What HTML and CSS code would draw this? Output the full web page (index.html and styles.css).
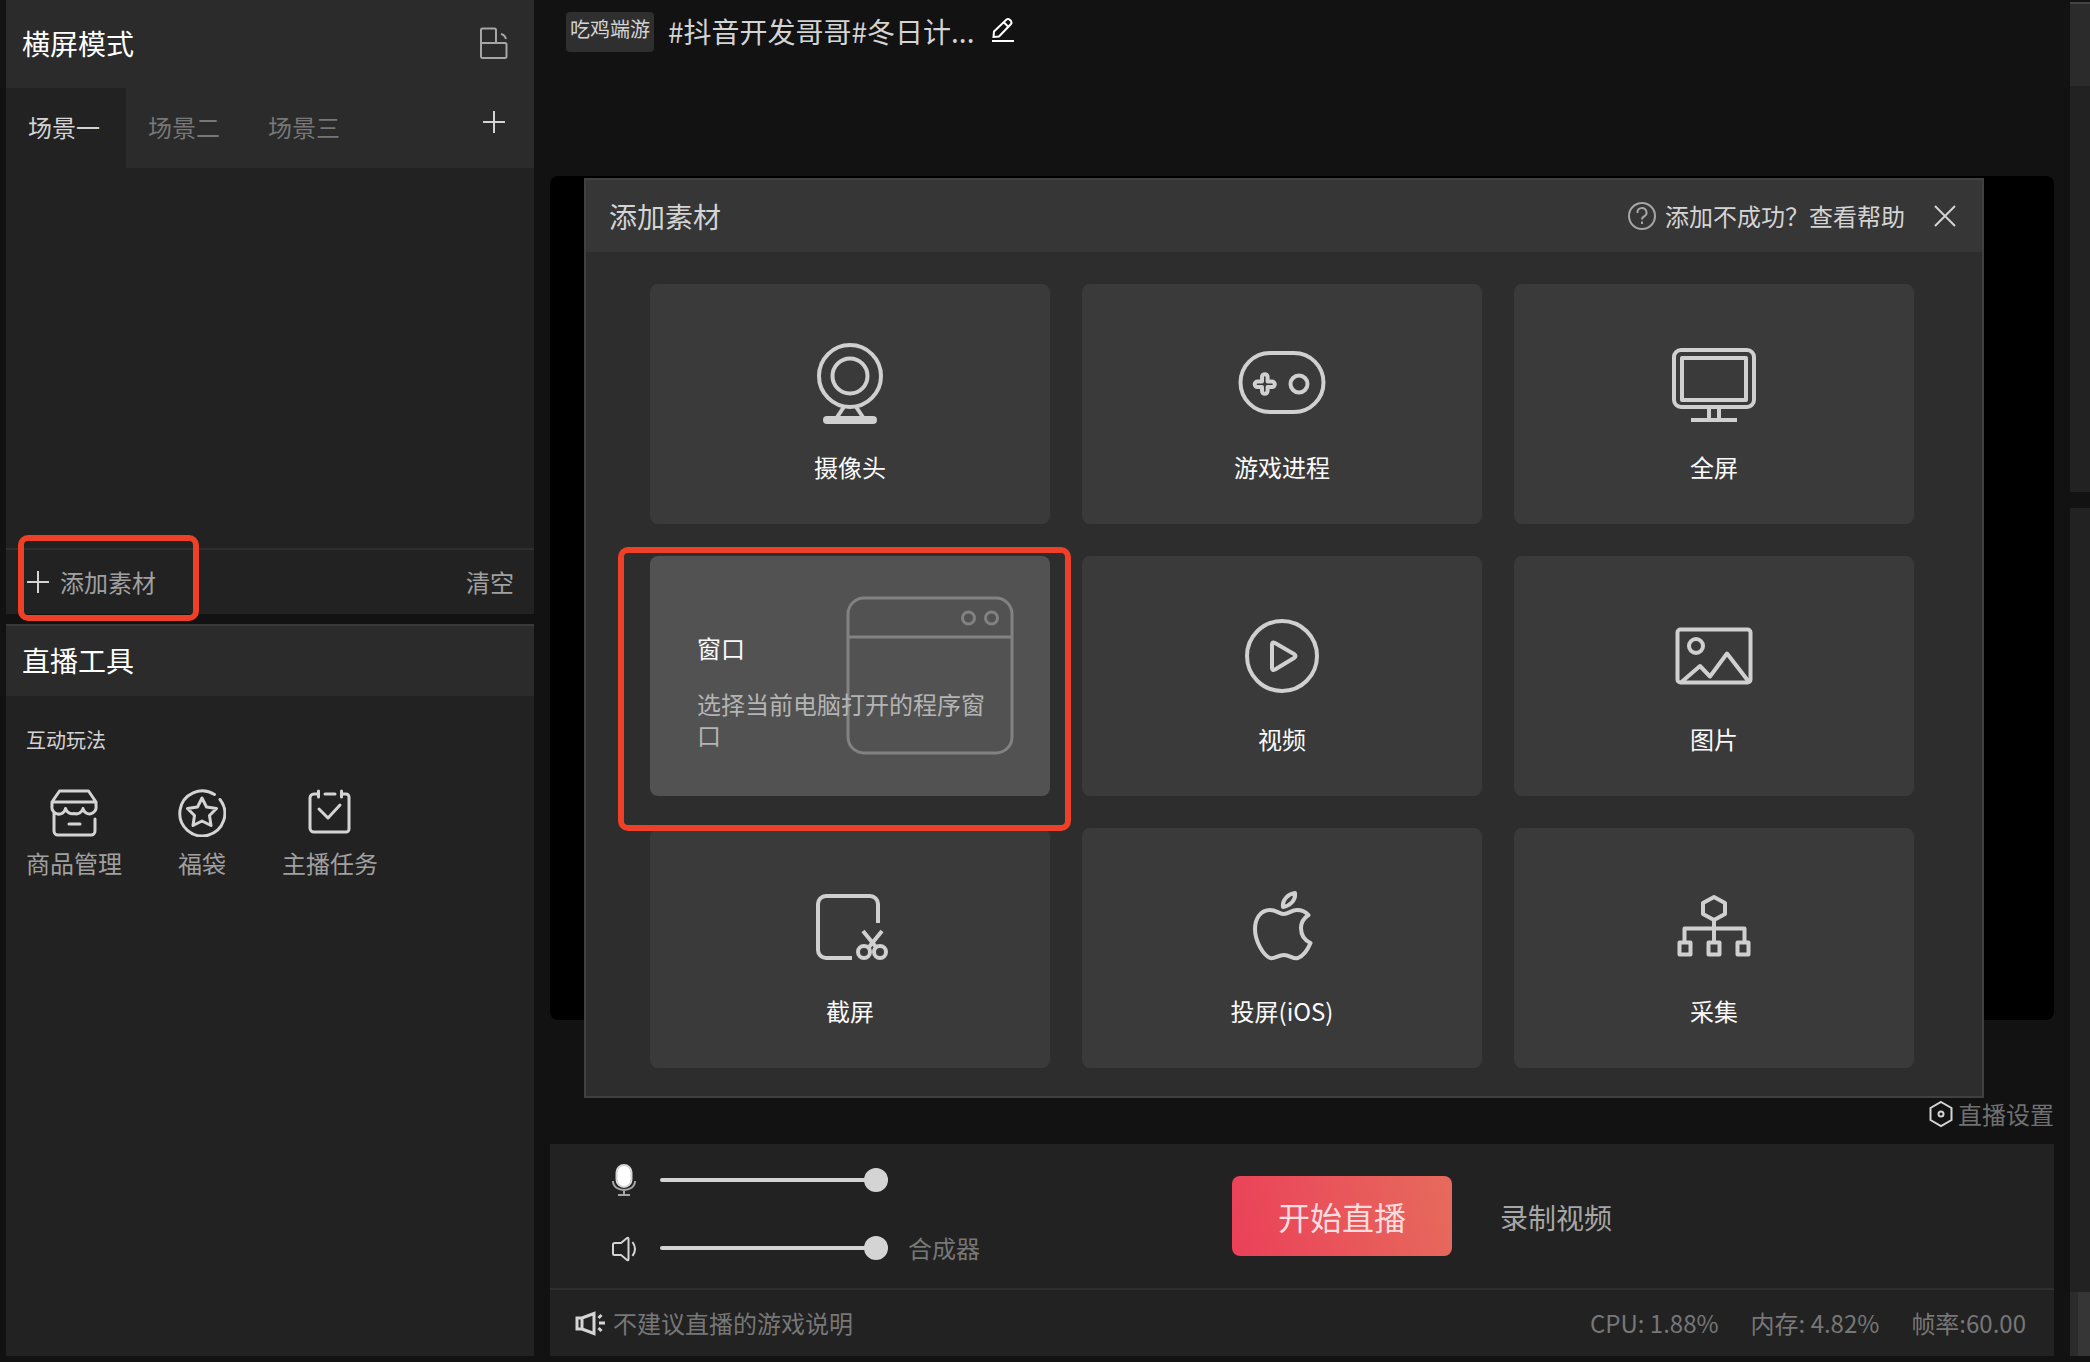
FILE: index.html
```html
<!DOCTYPE html>
<html lang="zh-CN">
<head>
<meta charset="utf-8">
<title>直播伴侣</title>
<link rel="stylesheet" href="styles.css">
</head>
<body>
<div class="app">
  <aside class="side">
    <section class="panel scenes">
      <header class="scenes-head">
        <h2 class="panel-title">横屏模式</h2>
        <button class="icon-btn" type="button" aria-label="切换横竖屏">
          <svg class="icon icon-muted" width="30" height="32" viewBox="0 0 30 32"><path d="M2 16V3a1.500 1.500 0 0 1 1.500-1.500h12A1.500 1.500 0 0 1 17 3v13M3 16h23a1.500 1.500 0 0 1 1.500 1.500v12A1.500 1.500 0 0 1 26 31H3.500A1.500 1.500 0 0 1 2 29.500V16zM22 7q4 1 5 5"/></svg>
        </button>
      </header>
      <nav class="tabs">
        <button class="tab tab-active" type="button">场景一</button>
        <button class="tab" type="button">场景二</button>
        <button class="tab" type="button">场景三</button>
        <button class="icon-btn tab-add" type="button" aria-label="添加场景">
          <svg class="icon" width="30" height="24" viewBox="0 0 30 24"><path d="M15 1v22M4 12h22"/></svg>
        </button>
      </nav>
      <div class="sources"></div>
      <footer class="source-bar">
        <button class="text-btn add-source" type="button">
          <svg class="icon" width="24" height="24" viewBox="0 0 24 24"><path d="M12 1v22M1 12h22"/></svg>
          添加素材
          <span class="mark mark-add"></span>
        </button>
        <button class="text-btn" type="button">清空</button>
      </footer>
    </section>
    <section class="panel tools">
      <header class="tools-head"><h2 class="panel-title">直播工具</h2></header>
      <h3 class="tools-group">互动玩法</h3>
      <div class="tools-grid">
        <button class="tool" type="button">
          <svg class="icon icon-bold" width="48" height="48" viewBox="0 0 48 48"><path d="M9.500 2h29L46 13v4a6.500 6.500 0 0 1-13 2.500 7 7 0 0 1-9 5 7 7 0 0 1-8.500-5A6.500 6.500 0 0 1 2 17v-4zM2 13h44M4 24v18a4 4 0 0 0 4 4h33a4 4 0 0 0 4-4V30M19 35h11"/></svg>
          商品管理
        </button>
        <button class="tool" type="button">
          <svg class="icon icon-bold" width="48" height="48" viewBox="0 0 48 48"><path d="M36.500 5.500A22.500 22.500 0 1 0 42 10.500M24 9l4.500 9 10 1.500-7 7 1.500 10-9-4.500-9 4.500 1.500-10-7-7 10-1.500z"/></svg>
          福袋
        </button>
        <button class="tool" type="button">
          <svg class="icon icon-bold" width="48" height="48" viewBox="0 0 48 48"><path d="M12 5H8a4 4 0 0 0-4 4v30a4 4 0 0 0 4 4h32a3 3 0 0 0 3-3V8a3 3 0 0 0-3-3h-4M12.500 2v6M35.500 2v6M19 5h10M13 20l9 9 12-13"/></svg>
          主播任务
        </button>
      </div>
    </section>
  </aside>

  <main class="main">
    <header class="room">
      <span class="room-tag">吃鸡端游</span>
      <h1 class="room-title">#抖音开发哥哥#冬日计...</h1>
      <button class="icon-btn" type="button" aria-label="编辑标题">
        <svg class="icon icon-white" width="26" height="26" viewBox="0 0 26 26"><path d="M2 24h22M4 14.500L16.500 2.500q1.500-1 3 0l1.500 1.500q1 1.500 0 3L9 19.500 3.500 20zM14 5.500l4 4"/></svg>
      </button>
    </header>

    <div class="stage">
      <section class="dialog" role="dialog" aria-labelledby="dialog-title">
        <header class="dialog-head">
          <h2 class="dialog-title" id="dialog-title">添加素材</h2>
          <a class="help" href="#">
            <svg class="icon icon-muted" width="30" height="30" viewBox="0 0 30 30"><circle cx="15" cy="15" r="13"/><path d="M10.500 12a4.500 4.500 0 1 1 6.500 3.500q-2 1-2 3M15 20.500v2.500"/></svg>
            添加不成功？查看帮助
          </a>
          <button class="icon-btn" type="button" aria-label="关闭">
            <svg class="icon" width="22" height="22" viewBox="0 0 22 22"><path d="M1 1l20 20M21 1L1 21"/></svg>
          </button>
        </header>
        <div class="cards">
          <button class="card" type="button">
            <svg class="icon icon-card" width="96" height="96" viewBox="0 0 96 96"><circle cx="48" cy="40" r="31"/><circle cx="48" cy="40" r="17.500"/><path d="M42.500 70L34.500 82M53.500 70l8 12"/><rect x="23" y="82" width="50" height="4" rx="2"/></svg>
            摄像头
          </button>
          <button class="card" type="button">
            <svg class="icon icon-card" width="96" height="96" viewBox="0 0 96 96"><rect x="6.500" y="17" width="83" height="59" rx="29.500"/><circle cx="65" cy="48" r="8.500"/><path d="M28 45.500V41a2.800 2.800 0 0 1 5.600 0v4.500H38a2.800 2.800 0 0 1 0 5.600h-4.400V55a2.800 2.800 0 0 1-5.600 0v-3.900h-4.500a2.800 2.800 0 0 1 0-5.600z"/></svg>
            游戏进程
          </button>
          <button class="card" type="button">
            <svg class="icon icon-card" width="96" height="96" viewBox="0 0 96 96"><rect x="8" y="14" width="80" height="57" rx="7"/><rect x="16" y="22" width="64" height="42"/><path d="M43 72v12M53 72v12M25 84h46"/></svg>
            全屏
          </button>
          <div class="card-slot">
            <button class="card card-open" type="button">
              <svg class="card-art" width="168" height="160" viewBox="0 0 168 160"><rect x="2" y="2" width="164" height="155" rx="16"/><path d="M2 41h164"/><circle cx="122.500" cy="22" r="6"/><circle cx="145.500" cy="22" r="6"/></svg>
              <span class="card-name">窗口</span>
              <span class="card-desc">选择当前电脑打开的程序窗口</span>
            </button>
            <span class="mark mark-card"></span>
          </div>
          <button class="card" type="button">
            <svg class="icon icon-card" width="96" height="96" viewBox="0 0 96 96"><circle cx="48" cy="48" r="35"/><path d="M38 36.500q0-3 3-1.500l19 11q3 2 0 4L41 61.500q-3 1.500-3-1.500z"/></svg>
            视频
          </button>
          <button class="card" type="button">
            <svg class="icon icon-card" width="96" height="96" viewBox="0 0 96 96"><rect x="11.500" y="21.500" width="73" height="53" rx="3"/><circle cx="30" cy="38" r="7"/><path d="M15.500 74L34 58l10 10.500L61 45.500 83 74"/></svg>
            图片
          </button>
          <button class="card" type="button">
            <svg class="icon icon-card" width="96" height="96" viewBox="0 0 96 96"><path d="M76 43V24a8 8 0 0 0-8-8H24a8 8 0 0 0-8 8v46a8 8 0 0 0 8 8h26M61 51l13 16M80 51L67 67"/><circle cx="62" cy="72" r="6"/><circle cx="78" cy="72" r="6"/></svg>
            截屏
          </button>
          <button class="card" type="button">
            <svg class="icon icon-card" width="96" height="96" viewBox="0 0 96 96"><path d="M50 34c-4 0-8-4-14-4-9 0-15 8-15 19 0 12 8 26 15 29 4 1.500 8-3 14-3s9 4.500 14 3c5-2 10-9 12.500-15C70 60 67 55 67 48c0-6 3-10 7.500-13C71 31 67 30 63 30c-5 0-9 4-13 4zM49 27c-1-7 5-13 12-14 1 7-5 13-12 14z"/></svg>
            投屏(iOS)
          </button>
          <button class="card" type="button">
            <svg class="icon icon-card" width="96" height="96" viewBox="0 0 96 96"><path d="M48 17l11 6v11l-11 6-11-6V23zM48 40v22M18.500 62V48.500h60V62"/><path d="M13.500 62.500h11v12h-11zM42.500 62.500h11v12h-11zM71.500 62.500h11v12h-11z"/></svg>
            采集
          </button>
        </div>
      </section>
    </div>

    <div class="settings-row">
      <button class="settings" type="button">
        <svg class="icon" width="26" height="28" viewBox="0 0 26 28"><path d="M13 2l10.500 6v12L13 26 2.500 20V8z"/><circle cx="13" cy="14" r="2.500"/></svg>
        直播设置
      </button>
    </div>

    <section class="console">
      <div class="console-main">
        <div class="mixer">
          <label class="channel">
            <svg class="icon" width="28" height="32" viewBox="0 0 28 32"><rect class="mic-head" x="6.500" y="1" width="15" height="22" rx="7.500"/><path class="mic-foot" d="M3 17c0 12 22 12 22 0M14 26v4M8 31h12"/></svg>
            <input class="slider" type="range" min="0" max="100" value="100" aria-label="麦克风音量">
          </label>
          <label class="channel">
            <svg class="icon" width="28" height="28" viewBox="0 0 28 28"><path d="M3 10.500a1.500 1.500 0 0 1 1.500-1.500H11l6-5q1.500-1 1.500 1v20q0 2-1.500 1l-6-5H4.500A1.500 1.500 0 0 1 3 19.500zM22.500 8q5 7 0 14"/></svg>
            <input class="slider" type="range" min="0" max="100" value="100" aria-label="扬声器音量">
            合成器
          </label>
        </div>
        <button class="start" type="button">开始直播</button>
        <button class="record" type="button">录制视频</button>
      </div>
      <footer class="status">
        <a class="notice" href="#">
          <svg class="icon" width="32" height="28" viewBox="0 0 32 28"><path class="horn" d="M3 9h5v11H3zM8 9l12-4.500v20L8 20M25 14h6M24.500 9l3-3M24.500 19l3 3"/></svg>
          不建议直播的游戏说明
        </a>
        <span>CPU: 1.88%</span>
        <span>内存: 4.82%</span>
        <span>帧率:60.00</span>
      </footer>
    </section>
  </main>

  <aside class="rail">
    <section class="panel rail-top"><div class="rail-head"></div></section>
    <section class="panel rail-bottom"><div class="rail-foot"></div></section>
  </aside>
</div>
</body>
</html>
```
FILE: styles.css
```css
* {
  box-sizing: border-box;
}

body {
  margin: 0;
  background: #121212;
  color: #d4d4d4;
  font-family: "Noto Sans CJK SC", "Noto Sans", sans-serif;
  font-size: 24px;
  line-height: 32px;
}

h1, h2, h3 {
  margin: 0;
  font-weight: 400;
}

button {
  margin: 0;
  padding: 0;
  border: 0;
  background: none;
  color: inherit;
  font: inherit;
  cursor: pointer;
}

a {
  color: inherit;
  text-decoration: none;
}

.icon {
  display: block;
  flex: none;
  fill: none;
  stroke: #d4d4d4;
  stroke-width: 2;
}

.icon-muted { stroke: #a6a6a6; }
.icon-white { stroke: #fff; }
.icon-bold { stroke-width: 3; stroke-linecap: round; stroke-linejoin: round; }
.icon-card { stroke: #d0d0d0; stroke-width: 4; stroke-linejoin: round; }
.icon-btn { display: flex; }
.horn { stroke-width: 3; }

.app {
  display: grid;
  grid-template-columns: 528px minmax(0, 1fr) 20px;
  gap: 16px;
  min-height: 100vh;
  padding: 0 0 6px 6px;
}

.panel { background: #222; }

.panel-title {
  color: #fff;
  font-size: 28px;
  line-height: 40px;
}

/* Left column */
.side {
  display: flex;
  flex-direction: column;
  gap: 10px;
}

.scenes {
  display: flex;
  flex-direction: column;
  height: 614px;
}

.scenes-head {
  display: flex;
  align-items: center;
  justify-content: space-between;
  height: 88px;
  padding: 0 25px 2px 16px;
  background: #2b2b2b;
}

.tabs {
  display: flex;
  height: 80px;
  padding-right: 25px;
  background: #2b2b2b;
}

.tab {
  width: 120px;
  padding: 0 4px 2px 0;
  color: #777;
}

.tab-active {
  background: #222;
  color: #d4d4d4;
}

.tab-add {
  margin-left: auto;
  padding-top: 22px;
}

.sources { flex: 1; }

.source-bar {
  display: flex;
  align-items: center;
  justify-content: space-between;
  height: 66px;
  padding: 0 20px;
  border-top: 2px solid #2f2f2f;
  color: #a0a0a0;
}

.text-btn {
  position: relative;
  display: flex;
  align-items: center;
  gap: 10px;
}

.mark {
  position: absolute;
  border: 6px solid #ee4026;
  border-radius: 10px;
  pointer-events: none;
}

.mark-add { inset: -31px -43px -23px -8px; }
.mark-card { inset: -9px -21px -35px -32px; }

.tools { flex: 1; }

.tools-head {
  display: flex;
  align-items: center;
  height: 72px;
  padding: 0 16px 2px;
  border-top: 2px solid #393939;
  background: #2b2b2b;
}

.tools-group {
  padding: 28px 20px 0;
  font-size: 20px;
}

.tools-grid {
  display: grid;
  grid-template-columns: repeat(4, 128px);
  padding: 33px 4px;
}

.tool {
  display: flex;
  flex-direction: column;
  align-items: center;
  gap: 10px;
  color: #a0a0a0;
}

/* Main column */
.main {
  display: flex;
  flex-direction: column;
  min-width: 0;
}

.room {
  display: flex;
  align-items: flex-start;
  height: 176px;
  padding: 12px 16px 0;
}

.room-tag {
  height: 40px;
  margin-right: 14px;
  padding: 0 4px;
  border-radius: 4px;
  background: #2f2f2f;
  font-size: 20px;
  line-height: 34px;
}

.room-title {
  margin-right: 16px;
  font-size: 28px;
  line-height: 38px;
}

.room .icon-btn { padding-top: 5px; }

.stage {
  position: relative;
  flex: 1;
  min-height: 844px;
  border-radius: 8px;
  background: #000;
}

.dialog {
  position: absolute;
  top: 2px;
  left: 34px;
  right: 70px;
  border: 2px solid #404040;
  background: #2d2d2d;
}

.dialog-head {
  display: flex;
  align-items: center;
  height: 72px;
  padding: 0 26px 0 23px;
  background: #363636;
}

.dialog-title {
  margin-right: auto;
  font-size: 28px;
  line-height: 40px;
}

.help {
  display: flex;
  align-items: center;
  gap: 8px;
  margin-right: 29px;
}

.cards {
  display: grid;
  grid-template-columns: repeat(3, minmax(0, 1fr));
  gap: 32px;
  padding: 32px 68px 28px 64px;
}

.card {
  display: flex;
  flex-direction: column;
  align-items: center;
  gap: 19px;
  width: 100%;
  height: 240px;
  padding-top: 52px;
  border-radius: 8px;
  background: #3a3a3a;
  color: #fafafa;
}

.card-slot {
  position: relative;
  z-index: 1;
}

.card-open {
  position: relative;
  align-items: flex-start;
  gap: 24px;
  padding: 76px 47px 0;
  background: #525252;
  text-align: left;
}

.card-art {
  position: absolute;
  top: 40px;
  right: 36px;
  fill: none;
  stroke: #828282;
  stroke-width: 3;
}

.card-name,
.card-desc {
  position: relative;
}

.card-desc {
  max-width: 300px;
  color: #b4b4b4;
  line-height: 31px;
}

.settings-row {
  display: flex;
  justify-content: flex-end;
  align-items: flex-start;
  height: 124px;
  padding-top: 78px;
}

.settings {
  display: flex;
  align-items: center;
  gap: 4px;
  color: #707070;
}

/* Console */
.console { background: #222; }

.console-main {
  display: flex;
  align-items: center;
  height: 144px;
}

.mixer {
  flex: 0 0 682px;
  padding: 0 0 4px 60px;
}

.channel {
  display: flex;
  align-items: center;
  height: 68px;
  color: #777;
}

.slider {
  width: 228px;
  height: 24px;
  margin: 0 20px 0 22px;
  background: none;
  appearance: none;
}

.slider::-webkit-slider-runnable-track {
  height: 4px;
  border-radius: 2px;
  background: #d4d4d4;
}

.slider::-webkit-slider-thumb {
  width: 24px;
  height: 24px;
  margin-top: -10px;
  border-radius: 50%;
  background: #d4d4d4;
  appearance: none;
}

.mic-head {
  fill: #fff;
  stroke: #d4d4d4;
}

.mic-foot { stroke: #a6a6a6; }

.start {
  width: 220px;
  height: 80px;
  margin-right: 48px;
  border-radius: 8px;
  background: linear-gradient(75deg, #eb4059, #e66b5c);
  color: #fbdcdf;
  font-size: 32px;
}

.record {
  padding-top: 2px;
  color: #a6a6a6;
  font-size: 28px;
}

.status {
  display: flex;
  align-items: center;
  gap: 32px;
  height: 68px;
  padding: 0 28px 0 24px;
  border-top: 2px solid #2f2f2f;
  color: #777;
}

.notice {
  display: flex;
  align-items: center;
  gap: 7px;
  margin-right: auto;
}

/* Right rail */
.rail {
  display: flex;
  flex-direction: column;
  gap: 16px;
  padding-top: 2px;
}

.rail-top { height: 490px; }

.rail-head {
  height: 84px;
  border-top: 2px solid #444;
  background: #2b2b2b;
}

.rail-bottom {
  display: flex;
  flex-direction: column;
  justify-content: flex-end;
  flex: 1;
}

.rail-foot {
  height: 64px;
  border-left: 8px solid #2b2b2b;
  background: #363636;
}
```
